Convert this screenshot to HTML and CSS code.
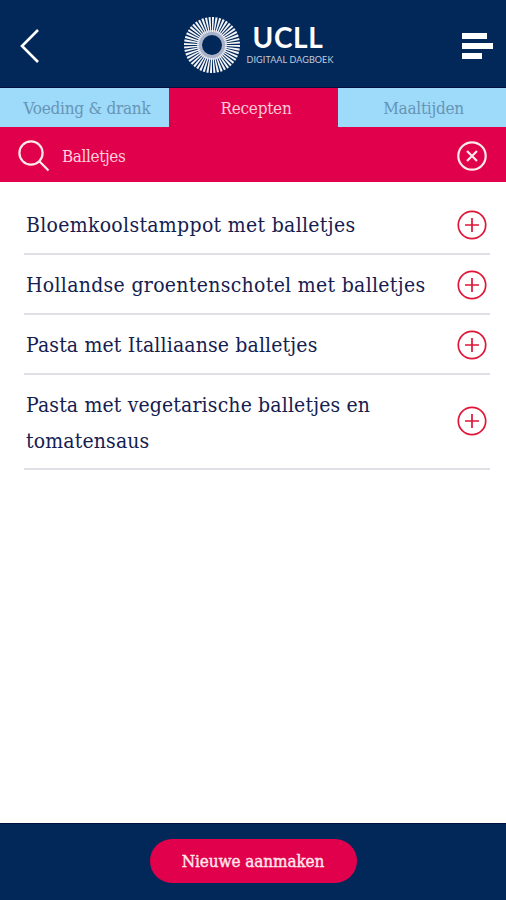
FILE: index.html
```html
<!DOCTYPE html>
<html lang="nl">

<head>
    <meta charset="UTF-8">
    <title>UCLL Digitaal Dagboek</title>
    <link rel="stylesheet" href="styles.css">
</head>

<body>
    <svg class="sprite">
        <symbol id="plus" viewBox="0 0 30 30">
            <circle cx="15" cy="15" r="13.7" />
            <path d="M15 8v14M8 15h14" />
        </symbol>
    </svg>

    <header class="header">
        <svg class="back" viewBox="0 0 20 36">
            <path d="M18 2L2 18L18 34" />
        </svg>
        <div class="brand">
            <svg class="logo" viewBox="0 0 58 58">
                <circle class="logo-core" cx="29" cy="29" r="12.5" />
                <circle class="logo-rays" cx="29" cy="29" r="20.5" pathLength="480" />
            </svg>
            <div class="brand-text">
                <span class="brand-name">UCLL</span>
                <span class="brand-sub">DIGITAAL DAGBOEK</span>
            </div>
        </div>
        <div class="menu">
            <span class="bar bar-top"></span>
            <span class="bar"></span>
            <span class="bar bar-bottom"></span>
        </div>
    </header>

    <nav class="tabs">
        <a class="tab tab-food">Voeding &amp; drank</a>
        <a class="tab active">Recepten</a>
        <a class="tab tab-meals">Maaltijden</a>
    </nav>

    <div class="search">
        <svg class="search-icon" viewBox="0 0 32 32">
            <circle cx="13" cy="13" r="11.6" />
            <path d="M21.3 21.3L30.5 30.5" />
        </svg>
        <span class="search-text">Balletjes</span>
        <svg class="clear" viewBox="0 0 30 30">
            <circle cx="15" cy="15" r="13.7" />
            <path d="M10 10L20 20M20 10L10 20" />
        </svg>
    </div>

    <ul class="recipes">
        <li class="recipe">
            <span class="recipe-name wide">Bloemkoolstamppot met balletjes</span>
            <svg class="add"><use href="#plus" /></svg>
        </li>
        <li class="recipe">
            <span class="recipe-name wide">Hollandse groentenschotel met balletjes</span>
            <svg class="add"><use href="#plus" /></svg>
        </li>
        <li class="recipe">
            <span class="recipe-name">Pasta met Italliaanse balletjes</span>
            <svg class="add"><use href="#plus" /></svg>
        </li>
        <li class="recipe recipe-long">
            <span class="recipe-name">Pasta met vegetarische balletjes en<br>tomatensaus</span>
            <svg class="add"><use href="#plus" /></svg>
        </li>
    </ul>

    <footer class="footer">
        <button class="create" type="button">Nieuwe aanmaken</button>
    </footer>
</body>

</html>
```
FILE: styles.css
```css
* {
    box-sizing: border-box;
}

body {
    margin: 0;
    height: 900px;
    display: flex;
    flex-direction: column;
    background-color: #fff;
    font-family: "DejaVu Serif Condensed", "DejaVu Serif", serif;
    font-stretch: condensed;
    overflow: hidden;
}

svg {
    display: block;
    flex: none;
    fill: none;
}

.sprite {
    width: 0;
    height: 0;
    position: absolute;
}

.header {
    height: 88px;
    flex: none;
    display: flex;
    align-items: center;
    justify-content: space-between;
    padding: 4px 13px 0 20px;
    background-color: #022859;
    border-bottom: 1px solid #00113f;
}

.back {
    width: 20px;
    height: 36px;
    stroke: #fff;
    stroke-width: 2.6;
}

.brand {
    display: flex;
    align-items: center;
    margin-left: 14px;
}

.logo {
    width: 58px;
    height: 58px;
    margin-bottom: 1px;
}

.logo-core {
    stroke: #a9b2c8;
    stroke-width: 5;
}

.logo-rays {
    stroke: #f4f5f9;
    stroke-width: 15;
    stroke-dasharray: 6 4;
}

.brand-text {
    display: flex;
    flex-direction: column;
    margin-left: 6px;
    color: #fff;
}

.brand-name {
    font: bold 28px/28px Lato, sans-serif;
    height: 28px;
    letter-spacing: 0.6px;
    margin-left: 6px;
    margin-top: -3px;
}

.brand-sub {
    margin-top: 3px;
    font: 9px/11px Lato, sans-serif;
    letter-spacing: 0.1px;
    color: #c3cbdc;
    white-space: nowrap;
}

.menu {
    width: 31px;
    display: flex;
    flex-direction: column;
    gap: 4px;
}

.bar {
    height: 6px;
    background-color: #fff;
}

.bar-top {
    width: 25px;
}

.bar-bottom {
    width: 20px;
}

.tabs {
    height: 39px;
    flex: none;
    display: flex;
    background-color: #e1004b;
}

.tab {
    width: 169px;
    background-color: #9edaf9;
    color: #6695b5;
    font-size: 17px;
    letter-spacing: -0.25px;
    line-height: 41px;
    text-align: center;
    white-space: nowrap;
}

.tab-food {
    padding-left: 5px;
}

.active {
    background-color: #e1004b;
    color: #ffc9d6;
    padding-left: 5px;
}

.tab-meals {
    width: 168px;
    padding-left: 3px;
}

.search {
    height: 55px;
    flex: none;
    display: flex;
    align-items: center;
    padding: 3px 19px 0 18px;
    background-color: #e1004b;
}

.search-icon {
    width: 32px;
    height: 32px;
    stroke: #ffeaea;
    stroke-width: 2.2;
}

.search-text {
    flex: 1;
    margin-left: 12px;
    font-size: 17px;
    letter-spacing: -0.4px;
    color: #ffd0dc;
}

.clear {
    width: 30px;
    height: 30px;
    stroke: #ffeaea;
    stroke-width: 2.2;
}

.recipes {
    flex: 1;
    margin: 0;
    padding: 13px 16px 0 24px;
    list-style: none;
}

.recipe {
    height: 60px;
    display: flex;
    align-items: center;
    justify-content: space-between;
    padding: 2px 3px 0 2px;
    border-bottom: 2px solid #dfe0e6;
}

.recipe-long {
    height: 95px;
}

.recipe-long .add {
    margin-bottom: 3px;
}

.recipe-name {
    font-size: 21px;
    letter-spacing: 0.14px;
    line-height: 36px;
    color: #15204f;
    white-space: nowrap;
}

.wide {
    letter-spacing: 0.31px;
}

.add {
    width: 30px;
    height: 30px;
    stroke: #df1638;
    stroke-width: 1.7;
}

.footer {
    height: 77px;
    flex: none;
    display: flex;
    justify-content: center;
    align-items: flex-start;
    padding-top: 15px;
    background-color: #022859;
    border-top: 1px solid #00113f;
}

.create {
    width: 207px;
    height: 44px;
    border: none;
    border-radius: 22px;
    background-color: #e1004b;
    color: #ffe6ec;
    font: inherit;
    font-size: 17px;
    letter-spacing: -0.1px;
    padding: 0 0 1px;
    -webkit-text-stroke: 0.4px #ffe6ec;
}
```
